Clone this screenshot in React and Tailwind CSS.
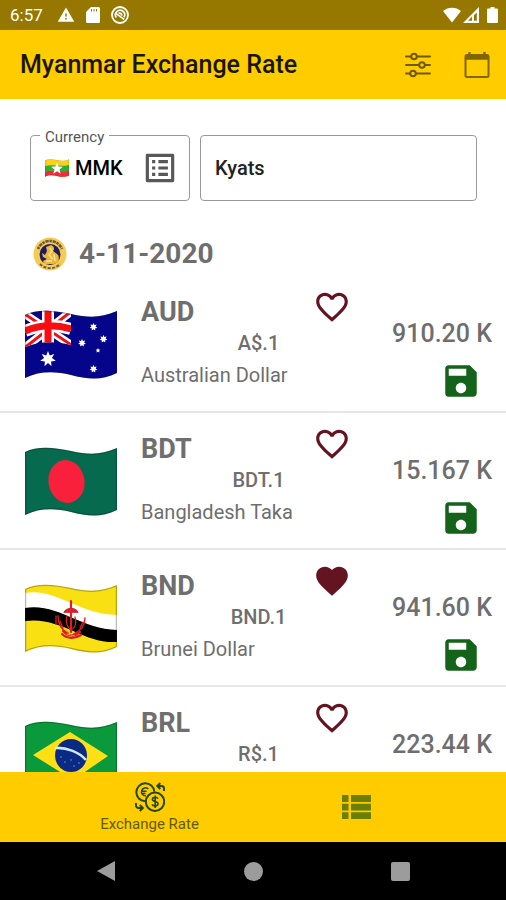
import { useState } from 'react';
import { MdFavorite, MdFavoriteBorder, MdSave, MdListAlt, MdWarning } from 'react-icons/md';

const WAVE = 'M0 5C12 -1 28 0 46 4S76 8 92 1V63C76 71 62 69 46 65S14 61 0 68Z';

function WavingFlag({ id, label, className, children }) {
  return (
    <svg viewBox="0 0 92 70" className={className} role="img" aria-label={label}>
      <defs>
        <clipPath id={id}>
          <path d={WAVE} />
        </clipPath>
      </defs>
      <g clipPath={`url(#${id})`}>
        {children}
        <path d={WAVE} fill="none" stroke="#1a1a1a" strokeOpacity="0.3" strokeWidth="2.5" />
      </g>
    </svg>
  );
}

function starPoints(cx, cy, outer, inner, count) {
  const points = [];
  for (let i = 0; i < count * 2; i += 1) {
    const r = i % 2 === 0 ? outer : inner;
    const a = (Math.PI * i) / count - Math.PI / 2;
    points.push(`${(cx + r * Math.cos(a)).toFixed(2)},${(cy + r * Math.sin(a)).toFixed(2)}`);
  }
  return points.join(' ');
}

function AustraliaFlag() {
  return (
    <WavingFlag id="flag-au" label="Australia" className="w-full">
      <rect width="92" height="70" fill="#05058c" />
      <clipPath id="canton">
        <path d="M0 0H46V35C30 31 14 31 0 37Z" />
      </clipPath>
      <g clipPath="url(#canton)">
        <path d="M-2 3L48 36M-2 39L48 0" stroke="#fff" strokeWidth="8" />
        <path d="M-2 3L48 36M-2 39L48 0" stroke="#f01018" strokeWidth="3" />
        <path d="M23 0V35M0 21C14 15 30 14 46 19" stroke="#fff" strokeWidth="12" fill="none" />
        <path d="M23 0V34M0 21C14 15 30 14 46 19" stroke="#f80d12" strokeWidth="7" fill="none" />
      </g>
      <g fill="#fff">
        <polygon points={starPoints(23, 49, 8, 4, 7)} />
        <polygon points={starPoints(68.5, 17, 4, 2.2, 7)} />
        <polygon points={starPoints(78.5, 29, 4, 2.2, 7)} />
        <polygon points={starPoints(57, 33, 4, 2.2, 7)} />
        <polygon points={starPoints(73, 40.5, 2.5, 1.2, 5)} />
        <polygon points={starPoints(68.5, 59, 4, 2.2, 7)} />
      </g>
    </WavingFlag>
  );
}

function BangladeshFlag() {
  return (
    <WavingFlag id="flag-bd" label="Bangladesh" className="w-full">
      <rect width="92" height="70" fill="#066a4e" />
      <ellipse cx="41.5" cy="34.5" rx="18" ry="21.5" transform="rotate(-10 41.5 34.5)" fill="#f9203b" />
    </WavingFlag>
  );
}

function BruneiFlag() {
  return (
    <WavingFlag id="flag-bn" label="Brunei" className="w-full">
      <rect width="92" height="70" fill="#f8e013" />
      <path d="M0 9C32 4 52 30 92 31V46C58 46 34 19 0 24Z" fill="#fff" />
      <path d="M0 24C34 19 54 45 92 46V58C58 60 36 32 0 37Z" fill="#000" />
      <g stroke="#d8202a" fill="none" strokeLinecap="round">
        <path d="M46 17V48" strokeWidth="2.2" />
        <path d="M39 28C41 23 51 23 53 28Z" fill="#d8202a" strokeWidth="1" />
        <path d="M42 32C40 39 43 44 46 46M50 33C52 40 50 44 46 46" strokeWidth="1.3" />
        <path d="M33 32C33 40 37 46 43 49M60 34C60 42 55 47 49 50" strokeWidth="1.4" />
        <path d="M31 32V40M35 37L38 44M58 38L55 44" strokeWidth="1.3" />
        <path d="M38 47C42 52 50 53 55 48M37 50C42 55 50 55 56 51" strokeWidth="2.2" />
      </g>
      <path d="M42 50L50 52M40 45L43 48" stroke="#f3a51c" strokeWidth="1.2" />
    </WavingFlag>
  );
}

function BrazilFlag() {
  return (
    <WavingFlag id="flag-br" label="Brazil" className="w-full">
      <rect width="92" height="70" fill="#0a9a3c" />
      <path d="M8 34L45 11L83 35L48 59Z" fill="#ffe014" />
      <ellipse cx="46" cy="34.5" rx="16" ry="16.5" fill="#0a2a86" />
      <path d="M30 27C41 26 54 31 61 39" fill="none" stroke="#cfeaf2" strokeWidth="2.6" />
      <g fill="#8fa9d8">
        <circle cx="36" cy="36" r="0.7" />
        <circle cx="40" cy="41" r="0.7" />
        <circle cx="46" cy="39" r="0.7" />
        <circle cx="49" cy="45" r="0.7" />
        <circle cx="54" cy="42" r="0.7" />
      </g>
    </WavingFlag>
  );
}

function MyanmarFlag() {
  return (
    <WavingFlag id="flag-mm" label="Myanmar" className="w-6">
      <rect width="92" height="70" fill="#fbd116" />
      <path d="M0 27C30 18 60 32 92 23V45C60 52 30 40 0 48Z" fill="#2fae35" />
      <path d="M0 48C30 40 60 52 92 45V70H0Z" fill="#f02b3a" />
      <polygon points={starPoints(46, 37, 24, 10, 5)} fill="#fff" />
    </WavingFlag>
  );
}

function BankSeal() {
  return (
    <svg viewBox="0 0 34 34" className="h-[34px] w-[34px]" role="img" aria-label="Central Bank">
      <circle cx="17" cy="17" r="16.5" fill="#f5cb50" />
      <path d="M5 12A13 13 0 0 1 29 12" fill="none" stroke="#4b3a3f" strokeWidth="2.6" strokeDasharray="2.4 0.8 3.4 0.7" strokeOpacity="0.8" />
      <path d="M7 27A14 14 0 0 0 27 27" fill="none" stroke="#4b3a3f" strokeWidth="1.8" strokeDasharray="3 1.4" strokeOpacity="0.8" />
      <circle cx="17" cy="17.5" r="10.5" fill="#1d1c62" />
      <path d="M18 8C21 9 22 12 20 14L24 17C27 19 25 23 26 25L21 27H11L10 24L14 22L10 20L9 16L12 18L14 14L13 10Z" fill="#ecb83c" />
      <path d="M17 11L19 14L16 18L20 22M21 17L22 24M13 24H19" stroke="#fbe48e" strokeWidth="1.4" fill="none" />
    </svg>
  );
}

function TuneIcon() {
  return (
    <svg viewBox="0 0 28 28" className="h-7 w-7" fill="none" stroke="#6f5900" strokeWidth="2" strokeLinecap="round">
      <path d="M2 5.5H7M13 5.5H26M2 14H15M21 14H26M2 22.5H6M12 22.5H26" />
      <circle cx="10" cy="5.5" r="2.8" />
      <circle cx="18" cy="14" r="2.8" />
      <circle cx="9" cy="22.5" r="2.8" />
    </svg>
  );
}

function CalendarIcon() {
  return (
    <svg viewBox="0 0 28 28" className="h-7 w-7" fill="none" stroke="#806600">
      <rect x="2.5" y="4" width="23" height="22" rx="1.5" strokeWidth="2" />
      <path d="M2.5 6.5H25.5" strokeWidth="4.5" />
      <path d="M6.5 1V5M21.5 1V5" strokeWidth="2.4" />
    </svg>
  );
}

function ExchangeIcon() {
  return (
    <svg viewBox="0 0 30 30" className="h-[30px] w-[30px]" fill="none" stroke="#23480c" strokeWidth="2">
      <path d="M10 19.3A9 9 0 1 1 19.3 9.6" />
      <circle cx="20" cy="19.7" r="9.2" />
      <path d="M13.3 7A4 4 0 1 0 11 13.8M6.5 9.3H11.5M6.5 11.6H10.5" strokeWidth="1.5" />
      <path d="M23 16.6C22 14.8 17.4 14.8 17.4 17.3C17.4 20 23 19 23 21.8C23 24.4 18 24.6 17 22.4M20.2 13.5V26" strokeWidth="1.6" />
      <path d="M29 9V6.5A2.5 2.5 0 0 0 26.5 4H22.5M25.3 1L22.3 4L25.3 7" />
      <path d="M1 21V23.5A2.5 2.5 0 0 0 3.5 26H7.5M4.8 23L7.8 26L4.8 29" />
    </svg>
  );
}

function StatusBar() {
  return (
    <div className="flex h-[30px] shrink-0 items-center bg-[#967800] pr-2 pl-[10px] text-white">
      <span className="w-[35px] text-[17px] leading-8">6:57</span>
      <MdWarning className="ml-3 h-[18px] w-[18px]" />
      <svg viewBox="0 0 14 16" className="ml-[11px] h-4 w-[14px]" fill="currentColor">
        <path d="M5 0H12.5A1.5 1.5 0 0 1 14 1.5V14.5A1.5 1.5 0 0 1 12.5 16H1.5A1.5 1.5 0 0 1 0 14.5V5Z" />
        <path d="M5.5 2V4.5M8 2V4.5M10.5 2V4.5" stroke="#967800" strokeWidth="1" />
      </svg>
      <svg viewBox="0 0 20 20" className="ml-[10px] h-5 w-5" fill="none" stroke="currentColor">
        <circle cx="10" cy="10" r="8" strokeWidth="1.8" />
        <path d="M6.4 12.6A4.6 4.6 0 1 1 14 12.2M5.8 8.4L14.2 14.4M8.5 8.4C10.5 7.6 12 9 11.6 10.8" strokeWidth="1.7" />
      </svg>
      <svg viewBox="0 0 18 16" className="ml-auto h-4 w-[18px]" fill="currentColor">
        <path d="M0 4C5 -0.5 13 -0.5 18 4L9 15.5Z" />
      </svg>
      <svg viewBox="0 0 16 16" className="ml-[2px] h-4 w-4">
        <path d="M16 0V16H0Z" fill="currentColor" />
        <path d="M13.8 5.5V13.8H11V8.2Z" fill="#967800" />
        <path d="M9 9.5V13.8H5Z" fill="#967800" />
      </svg>
      <svg viewBox="0 0 11 16" className="ml-2 h-4 w-[11px]" fill="currentColor">
        <path d="M3.5 0H7.5V1.5H10A1 1 0 0 1 11 2.5V15A1 1 0 0 1 10 16H1A1 1 0 0 1 0 15V2.5A1 1 0 0 1 1 1.5H3.5Z" />
      </svg>
    </div>
  );
}

const RATES = [
  { code: 'AUD', unit: 'A$.1', name: 'Australian Dollar', rate: '910.20 K', Flag: AustraliaFlag },
  { code: 'BDT', unit: 'BDT.1', name: 'Bangladesh Taka', rate: '15.167 K', Flag: BangladeshFlag },
  { code: 'BND', unit: 'BND.1', name: 'Brunei Dollar', rate: '941.60 K', Flag: BruneiFlag },
  { code: 'BRL', unit: 'R$.1', name: '', rate: '223.44 K', Flag: BrazilFlag },
];

function RateRow({ item, favorite, onToggle }) {
  const { Flag } = item;
  const Heart = favorite ? MdFavorite : MdFavoriteBorder;
  return (
    <li className="flex h-[137px] shrink-0 border-b-2 border-[#e6e6e6] pr-[14px] pl-[25px] text-[#6e6e6e]">
      <div className="w-[92px] shrink-0 pt-[34px]">
        <Flag />
      </div>
      <div className="ml-6 min-w-0 flex-1 pt-3">
        <div className="flex h-10 items-start justify-between pr-[25px]">
          <h2 className="pt-2 text-[27px] leading-8 font-bold">{item.code}</h2>
          <button type="button" onClick={onToggle} aria-label={`Favorite ${item.code}`} aria-pressed={favorite} className="text-[#641420]">
            <Heart className="h-[38px] w-[38px]" />
          </button>
        </div>
        <p className="pt-[3px] text-center text-xl leading-6 font-medium">{item.unit}</p>
        <p className="pt-2 text-xl leading-6">{item.name}</p>
      </div>
      <div className="flex w-[116px] shrink-0 flex-col items-end pt-11">
        <p className="text-[25px] leading-7 font-medium whitespace-nowrap">{item.rate}</p>
        <button type="button" aria-label={`Save ${item.code}`} className="mt-3 mr-[10px] text-[#14631a]">
          <MdSave className="h-[42px] w-[42px]" />
        </button>
      </div>
    </li>
  );
}

export default function App() {
  const [favorites, setFavorites] = useState(['BND']);
  const toggle = (code) =>
    setFavorites((list) => (list.includes(code) ? list.filter((c) => c !== code) : [...list, code]));

  return (
    <div className="flex h-screen flex-col overflow-hidden bg-white font-['Roboto',sans-serif]">
      <StatusBar />
      <header className="flex h-[69px] shrink-0 items-center bg-[#ffcc00] pr-[15px] pl-5">
        <h1 className="flex-1 text-[25px] font-medium text-[#1a1500]">Myanmar Exchange Rate</h1>
        <button type="button" aria-label="Filter">
          <TuneIcon />
        </button>
        <button type="button" aria-label="Pick a date" className="ml-[31px]">
          <CalendarIcon />
        </button>
      </header>

      <main className="flex min-h-0 flex-1 flex-col overflow-hidden">
        <div className="flex shrink-0 gap-[10px] pt-9 pr-[29px] pl-[30px]">
          <div className="relative flex h-[66px] w-[160px] items-center rounded border border-[#999] pr-[10px] pl-[14px]">
            <label htmlFor="currency" className="absolute -top-[7px] left-[9px] bg-white px-[5px] text-[15px] leading-4 text-[#555]">
              Currency
            </label>
            <MyanmarFlag />
            <select id="currency" className="ml-[6px] min-w-0 flex-1 appearance-none bg-transparent text-xl font-medium text-black outline-none">
              <option>MMK</option>
            </select>
            <MdListAlt className="h-[38px] w-[38px] shrink-0 text-[#585858]" />
          </div>
          <input
            type="text"
            aria-label="Amount in kyats"
            defaultValue="Kyats"
            className="h-[66px] min-w-0 flex-1 rounded border border-[#999] px-[14px] text-xl font-medium text-[#222] outline-none"
          />
        </div>

        <div className="mt-9 flex shrink-0 items-center gap-3 pl-[33px]">
          <BankSeal />
          <time dateTime="2020-11-04" className="text-[28px] leading-8 font-bold text-[#6e6e6e]">
            4-11-2020
          </time>
        </div>

        <ul className="mt-[5px] flex min-h-0 flex-1 flex-col overflow-y-auto [scrollbar-width:none]">
          {RATES.map((item) => (
            <RateRow key={item.code} item={item} favorite={favorites.includes(item.code)} onToggle={() => toggle(item.code)} />
          ))}
        </ul>
      </main>

      <nav className="flex h-[70px] shrink-0 justify-center bg-[#ffcc00]">
        <button type="button" className="flex w-[207px] flex-col items-center pt-[10px]">
          <ExchangeIcon />
          <span className="text-[15px] leading-6 text-[#5f5a05]">Exchange Rate</span>
        </button>
        <button type="button" aria-label="List" className="flex w-[207px] items-center justify-center">
          <svg viewBox="0 0 29 24" className="h-6 w-[29px]" fill="#6b7f05">
            <path d="M0 0H6.5V7H0ZM9 0H29V7H9ZM0 8.7H6.5V15.5H0ZM9 8.7H29V15.5H9ZM0 17.2H6.5V24H0ZM9 17.2H29V24H9Z" />
          </svg>
        </button>
      </nav>

      <div className="flex h-[58px] shrink-0 justify-center bg-black">
        <button type="button" aria-label="Back" className="flex w-[147px] items-center justify-center">
          <svg viewBox="0 0 18 20" className="h-5 w-[18px]" fill="#9c9c9c">
            <path d="M18 0V20L0 10Z" />
          </svg>
        </button>
        <button type="button" aria-label="Home" className="flex w-[147px] items-center justify-center">
          <span className="h-[19px] w-[19px] rounded-full bg-[#9c9c9c]" />
        </button>
        <button type="button" aria-label="Recent apps" className="flex w-[147px] items-center justify-center">
          <span className="h-[19px] w-[19px] rounded-xs bg-[#9c9c9c]" />
        </button>
      </div>
    </div>
  );
}
